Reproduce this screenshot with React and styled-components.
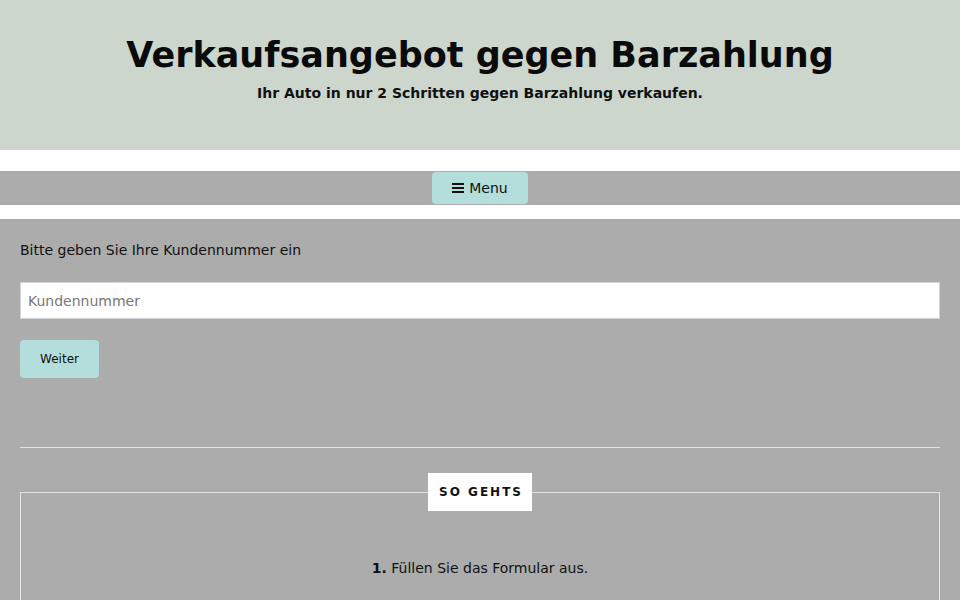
import React from "react";
import styled, { createGlobalStyle } from "styled-components";

const Global = createGlobalStyle`
  html, body { margin: 0; padding: 0; }
  body {
    background: #acacac;
    font-family: "DejaVu Sans", Verdana, sans-serif;
    color: #111;
  }
  * { box-sizing: border-box; }
`;

const Header = styled.header`
  background: #cdd6cc;
  height: 150px;
  padding-top: 34px;
  text-align: center;
`;

const Title = styled.h1`
  margin: 0;
  font-size: 35px;
  line-height: 43px;
  font-weight: bold;
  color: #0a0a0a;
`;

const Subtitle = styled.p`
  margin: 6px 0 0;
  font-size: 14px;
  line-height: 20px;
  font-weight: bold;
  color: #111;
`;

const Spacer = styled.div`
  background: #fff;
  height: ${(p) => p.$h}px;
`;

const Nav = styled.nav`
  background: #acacac;
  height: 34px;
  display: flex;
  justify-content: center;
  align-items: center;
`;

const MenuButton = styled.button`
  display: flex;
  align-items: center;
  gap: 5px;
  height: 32px;
  width: 96px;
  justify-content: center;
  border: none;
  border-radius: 4px;
  background: #b3dedb;
  font-family: inherit;
  font-size: 14px;
  color: #111;
  padding: 0;
`;

const Main = styled.main`
  padding: 21px 20px 0;
`;

const Label = styled.p`
  margin: 0;
  font-size: 14px;
  line-height: 20px;
  color: #111;
`;

const Input = styled.input`
  display: block;
  width: 100%;
  height: 37px;
  margin-top: 22px;
  border: 1px solid #d4d4d4;
  background: #fff;
  padding: 0 7px;
  font-family: inherit;
  font-size: 14px;
  &::placeholder { color: #777; }
`;

const SubmitButton = styled.button`
  display: block;
  margin-top: 21px;
  width: 79px;
  height: 38px;
  border: none;
  border-radius: 4px;
  background: #b3dedb;
  font-family: inherit;
  font-size: 12px;
  color: #111;
  padding: 0;
`;

const Rule = styled.hr`
  margin: 69px 0 0;
  border: none;
  border-top: 1px solid #e4e4e4;
  height: 0;
`;

const Steps = styled.fieldset`
  margin: 25px 0 0;
  border: 1px solid #e4e4e4;
  padding: 47px 20px 60px;
  text-align: center;
`;

const Legend = styled.legend`
  margin: 0 auto;
  background: #fff;
  padding: 12px 9px 12px 11px;
  font-size: 12px;
  line-height: 14px;
  font-weight: bold;
  letter-spacing: 2px;
  color: #111;
`;

const Step = styled.p`
  margin: 0;
  font-size: 14px;
  line-height: 20px;
  color: #111;
  & b { font-weight: bold; }
`;

const BarsIcon = () => (
  <svg width="12" height="12" viewBox="0 0 12 12" aria-hidden="true">
    <rect x="0" y="1" width="12" height="2" fill="#111" />
    <rect x="0" y="5" width="12" height="2" fill="#111" />
    <rect x="0" y="9" width="12" height="2" fill="#111" />
  </svg>
);

export default function App() {
  return (
    <>
      <Global />
      <Header>
        <Title>Verkaufsangebot gegen Barzahlung</Title>
        <Subtitle>Ihr Auto in nur 2 Schritten gegen Barzahlung verkaufen.</Subtitle>
      </Header>
      <Spacer $h={21} />
      <Nav>
        <MenuButton>
          <BarsIcon />
          Menu
        </MenuButton>
      </Nav>
      <Spacer $h={14} />
      <Main>
        <Label>Bitte geben Sie Ihre Kundennummer ein</Label>
        <Input placeholder="Kundennummer" />
        <SubmitButton>Weiter</SubmitButton>
        <Rule />
        <Steps>
          <Legend>SO GEHTS</Legend>
          <Step>
            <b>1.</b> Füllen Sie das Formular aus.
          </Step>
        </Steps>
      </Main>
    </>
  );
}
